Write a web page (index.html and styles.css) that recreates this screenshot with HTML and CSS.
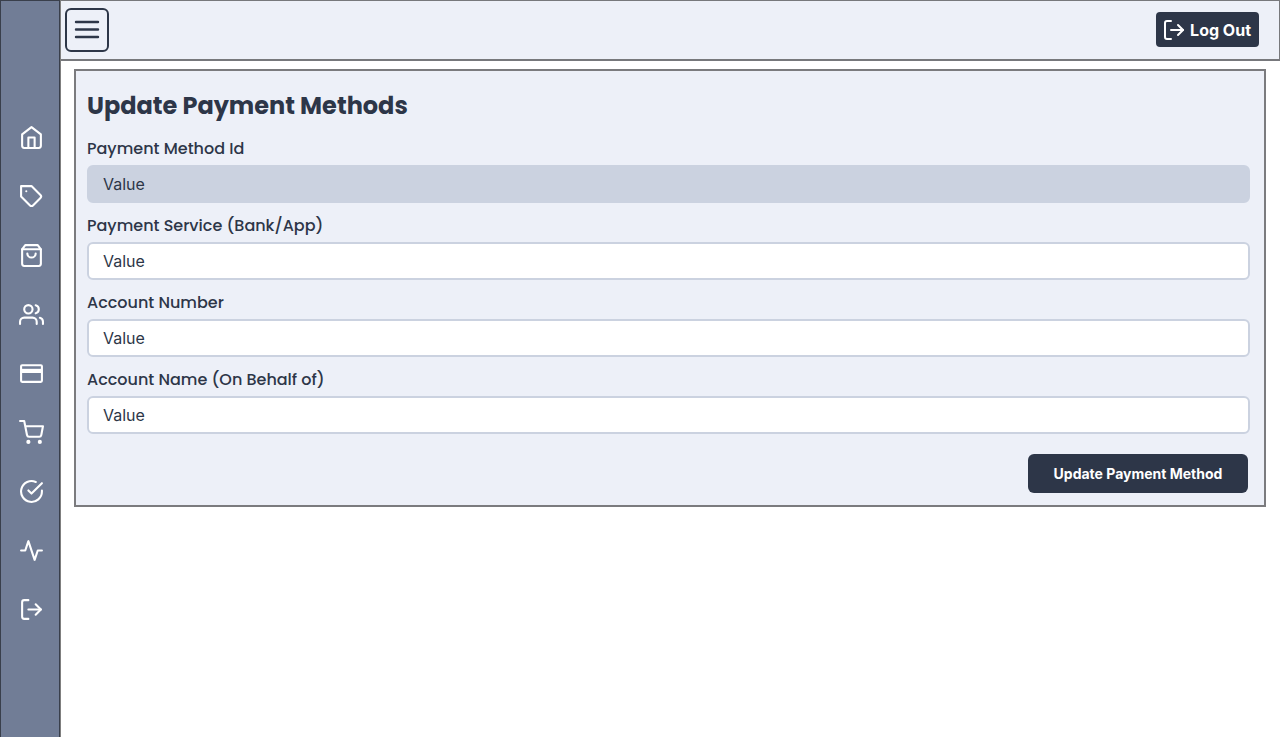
FILE: index.html
```html
<!DOCTYPE html>
<html lang="en">
<head>
<meta charset="utf-8">
<meta name="viewport" content="width=device-width, initial-scale=1">
<title>Update Payment Methods</title>
<link rel="stylesheet" href="styles.css">
</head>
<body>
<div class="app">
  <nav class="sidebar" aria-label="Main">
    <a class="nav-link" href="#home" aria-label="Home"><svg class="icon" viewBox="0 0 24 24"><path d="M3 9l9-7 9 7v11a2 2 0 0 1-2 2H5a2 2 0 0 1-2-2z"/><path d="M9 22V12h6v10"/></svg></a>
    <a class="nav-link" href="#tags" aria-label="Tags"><svg class="icon" viewBox="0 0 24 24"><path d="M20.59 13.41l-7.17 7.17a2 2 0 0 1-2.83 0L2 12V2h10l8.59 8.59a2 2 0 0 1 0 2.82z"/><path d="M7 7h.01"/></svg></a>
    <a class="nav-link" href="#products" aria-label="Products"><svg class="icon" viewBox="0 0 24 24"><path d="M6 2L3 6v14a2 2 0 0 0 2 2h14a2 2 0 0 0 2-2V6l-3-4z"/><path d="M3 6h18"/><path d="M16 10a4 4 0 0 1-8 0"/></svg></a>
    <a class="nav-link" href="#users" aria-label="Users"><svg class="icon" viewBox="0 0 24 24"><path d="M17 21v-2a4 4 0 0 0-4-4H5a4 4 0 0 0-4 4v2"/><circle cx="9" cy="7" r="4"/><path d="M23 21v-2a4 4 0 0 0-3-3.87"/><path d="M16 3.13a4 4 0 0 1 0 7.75"/></svg></a>
    <a class="nav-link" href="#payments" aria-label="Payment methods"><svg class="icon" viewBox="0 0 24 24"><rect x="2" y="4" width="20" height="16" rx="1"/><path class="card-stripe" d="M2 9.500h20"/></svg></a>
    <a class="nav-link" href="#cart" aria-label="Cart"><svg class="icon" viewBox="0 0 24 24"><circle cx="9" cy="21" r="1"/><circle cx="20" cy="21" r="1"/><path d="M1 1h4l2.68 13.39a2 2 0 0 0 2 1.61h9.72a2 2 0 0 0 2-1.61L23 6H6"/></svg></a>
    <a class="nav-link" href="#orders" aria-label="Completed orders"><svg class="icon" viewBox="0 0 24 24"><path d="M22 11.08V12a10 10 0 1 1-5.93-9.14"/><path d="M22 4L12 14.01l-3-3"/></svg></a>
    <a class="nav-link" href="#activity" aria-label="Activity"><svg class="icon" viewBox="0 0 24 24"><path d="M22 12h-4l-3 9L9 3l-3 9H2"/></svg></a>
    <a class="nav-link" href="#logout" aria-label="Log out"><svg class="icon" viewBox="0 0 24 24"><path d="M9 21H5a2 2 0 0 1-2-2V5a2 2 0 0 1 2-2h4"/><path d="M16 17l5-5-5-5"/><path d="M21 12H9"/></svg></a>
  </nav>
  <div class="main">
    <header class="topbar">
      <button class="menu-button" type="button" aria-label="Toggle menu"><svg class="menu-icon" viewBox="0 0 26 20"><path d="M2 2h22M2 9.500h22M2 17h22"/></svg></button>
      <button class="logout-button" type="button"><svg class="logout-icon" viewBox="0 0 24 24"><path d="M9 21H5a2 2 0 0 1-2-2V5a2 2 0 0 1 2-2h4"/><path d="M16 17l5-5-5-5"/><path d="M21 12H9"/></svg>Log Out</button>
    </header>
    <main class="panel">
      <h1 class="title">Update Payment Methods</h1>
      <form class="form">
        <div class="field">
          <label class="label" for="method-id">Payment Method Id</label>
          <input class="input input-readonly" id="method-id" type="text" value="Value" readonly>
        </div>
        <div class="field">
          <label class="label" for="service">Payment Service (Bank/App)</label>
          <input class="input" id="service" type="text" value="Value">
        </div>
        <div class="field">
          <label class="label" for="account-number">Account Number</label>
          <input class="input" id="account-number" type="text" value="Value">
        </div>
        <div class="field">
          <label class="label" for="account-name">Account Name (On Behalf of)</label>
          <input class="input" id="account-name" type="text" value="Value">
        </div>
        <div class="actions">
          <button class="submit-button" type="submit">Update Payment Method</button>
        </div>
      </form>
    </main>
  </div>
</div>
</body>
</html>
```
FILE: styles.css
```css
* {
  box-sizing: border-box;
}

body {
  margin: 0;
  background: #fff;
  color: #2d3648;
  font-family: Inter, "Liberation Sans", sans-serif;
}

.app {
  display: flex;
  min-height: 100vh;
}

.sidebar {
  flex: none;
  display: flex;
  flex-direction: column;
  align-items: center;
  gap: 34px;
  width: 60px;
  padding: 124px 0 0 2px;
  background: #717d96;
  border: 1px solid #393f4b;
  border-bottom: 0;
}

.nav-link {
  display: flex;
  color: #fff;
}

.icon,
.logout-icon,
.menu-icon {
  fill: none;
  stroke: currentColor;
  stroke-width: 2;
  stroke-linecap: round;
  stroke-linejoin: round;
}

.icon {
  width: 25px;
  height: 25px;
}

.icon .card-stripe {
  stroke-width: 4;
  stroke-linecap: butt;
}

.main {
  flex: 1;
  min-width: 0;
  border-left: 1px solid #7f7f7f;
}

.topbar {
  display: flex;
  align-items: center;
  justify-content: space-between;
  height: 61px;
  padding: 0 20px 1px 4px;
  background: #edf0f8;
  border: 1px solid #77787c;
  border-width: 1px 1px 2px 0;
}

.menu-button {
  display: flex;
  align-items: center;
  justify-content: center;
  width: 44px;
  height: 44px;
  padding: 0;
  color: #2d3648;
  background: transparent;
  border: 2px solid #2d3648;
  border-radius: 6px;
}

.menu-icon {
  width: 26px;
  height: 20px;
  stroke-width: 2.4;
}

.logout-button {
  display: flex;
  align-items: center;
  gap: 4px;
  height: 35px;
  padding: 0 8px 0 6px;
  color: #fff;
  background: #2d3648;
  border: 0;
  border-radius: 4px;
  font: 700 16px/24px Inter, "Liberation Sans", sans-serif;
}

.logout-icon {
  width: 24px;
  height: 24px;
}

.panel {
  margin: 8px 14px 14px 13px;
  padding: 19px 14px 12px 11px;
  background: #edf0f8;
  border: 2px solid #7b7b7e;
}

.title {
  margin: 0 0 15px;
  font: 700 24px/32px Poppins, Inter, sans-serif;
}

.form {
  display: flex;
  flex-direction: column;
  gap: 11px;
}

.field {
  display: flex;
  flex-direction: column;
  gap: 4px;
}

.label {
  font: 500 16px/24px Poppins, Inter, sans-serif;
}

.input {
  width: 100%;
  height: 38px;
  padding: 0 14px;
  color: #2d3648;
  background: #fff;
  border: 2px solid #cbd2e0;
  border-radius: 6px;
  font: 400 16px/24px Inter, "Liberation Sans", sans-serif;
}

.input-readonly {
  background: #cbd2e0;
}

.actions {
  display: flex;
  justify-content: flex-end;
  padding: 9px 2px 0 0;
}

.submit-button {
  width: 220px;
  height: 39px;
  color: #fff;
  background: #2d3648;
  border: 0;
  border-radius: 6px;
  font: 700 14px/20px Inter, "Liberation Sans", sans-serif;
}
```
